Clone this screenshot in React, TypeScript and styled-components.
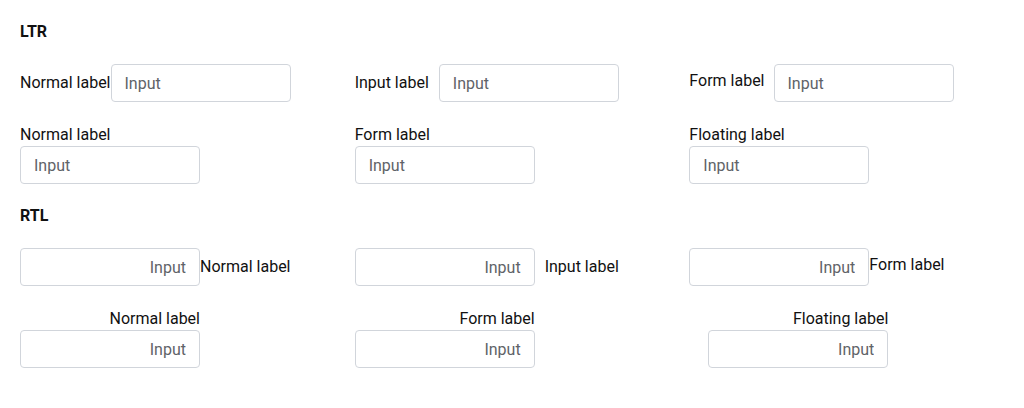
import React from 'react'

import { styled, createGlobalStyle } from 'styled-components'

const GlobalStyle = createGlobalStyle`
  body {
    margin: 0;
    background: #fff;
    font-family: Roboto, "Liberation Sans", sans-serif;
    color: #111;
  }
`

const Page = styled.div`
  padding: 20px 0 20px 20px;
  width: 1004px;
  display: flex;
  flex-direction: column;
  gap: 20px;
`

const Heading = styled.div`
  font-size: 16px;
  font-weight: 700;
  line-height: 24px;
  height: 24px;
`

const Grid = styled.div`
  display: grid;
  grid-template-columns: repeat(3, 1fr);
`

const InlineField = styled.div<{ $reverse?: boolean; $gap: number }>`
  display: flex;
  flex-direction: ${p => (p.$reverse ? 'row-reverse' : 'row')};
  justify-content: ${p => (p.$reverse ? 'flex-end' : 'flex-start')};
  align-items: center;
  gap: ${p => p.$gap}px;
`

const StackedField = styled.div<{ $reverse?: boolean; $shift?: number }>`
  display: flex;
  flex-direction: column;
  align-items: ${p => (p.$reverse ? 'flex-end' : 'flex-start')};
  width: 180px;
  margin-left: ${p => p.$shift ?? 0}px;
`

const Label = styled.label<{ $raise?: number }>`
  font-size: 16px;
  line-height: 24px;
  color: #111;
  white-space: nowrap;
  position: relative;
  top: ${p => -(p.$raise ?? 0)}px;
`

const StackLabel = styled(Label)`
  padding-top: 1px;
  line-height: 23px;
`

const TextInput = styled.input`
  box-sizing: border-box;
  width: 180px;
  height: 38px;
  padding: 0 13px;
  border: 1px solid #d1d5db;
  border-radius: 4px;
  font-family: Roboto, "Liberation Sans", sans-serif;
  font-size: 16px;
  color: #333;
  background: #fff;
  outline: none;

  &::placeholder {
    color: #5f6368;
  }
`

type FieldSpec = {
  label: string
  gap: number
  raise?: number
}

const inlineFields: FieldSpec[] = [
  { label: 'Normal label', gap: 0 },
  { label: 'Input label', gap: 10 },
  { label: 'Form label', gap: 9, raise: 2 },
]

const stackedLabels = ['Normal label', 'Form label', 'Floating label']

const rtlInline: FieldSpec[] = [
  { label: 'Normal label', gap: 0 },
  { label: 'Input label', gap: 10 },
  { label: 'Form label', gap: 0, raise: 2 },
]

function Section({ rtl }: { rtl?: boolean }) {
  const inline = rtl ? rtlInline : inlineFields
  const dir = rtl ? 'rtl' : 'ltr'

  return (
    <>
      <Heading>{rtl ? 'RTL' : 'LTR'}</Heading>
      <Grid>
        {inline.map(f => (
          <InlineField key={f.label} $reverse={rtl} $gap={f.gap}>
            <Label $raise={f.raise}>{f.label}</Label>
            <TextInput dir={dir} placeholder="Input" />
          </InlineField>
        ))}
      </Grid>
      <Grid>
        {stackedLabels.map((label, i) => (
          <StackedField key={label} $reverse={rtl} $shift={rtl && i === 2 ? 19 : 0}>
            <StackLabel>{label}</StackLabel>
            <TextInput dir={dir} placeholder="Input" />
          </StackedField>
        ))}
      </Grid>
    </>
  )
}

export default function App() {
  return (
    <>
      <GlobalStyle />
      <Page>
        <Section />
        <Section rtl />
      </Page>
    </>
  )
}
